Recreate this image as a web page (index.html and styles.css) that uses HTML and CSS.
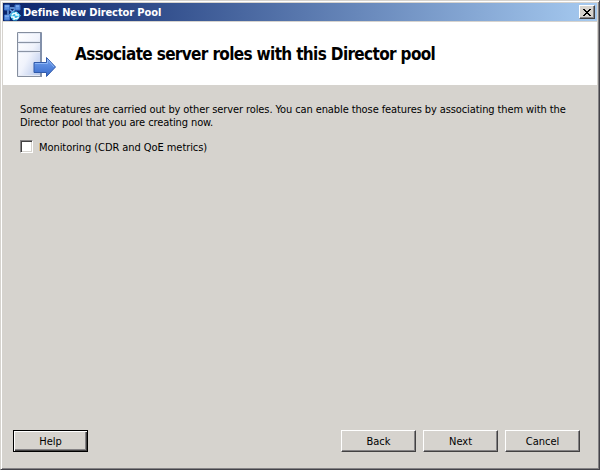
FILE: index.html
```html
<!DOCTYPE html>
<html lang="en">
<head>
<meta charset="utf-8">
<title>Define New Director Pool</title>
<link rel="stylesheet" href="styles.css">
</head>
<body>
<main class="window">
  <div class="titlebar">
    <svg class="app-icon" width="17" height="17" viewBox="0 0 17 17">
      <path d="M4 4 12 4M4 4V13M4 4 13 12M12 4 4 13" stroke="#78a9e8" stroke-width="1.4" fill="none"/>
      <path d="M.5 1h5v5h-5zM11 1h5v5h-5zM.5 11h5v5h-5z" fill="#5a8fe0" stroke="#3a70c8"/>
      <path d="M1 2h4M12 2h3M1 12h4" stroke="#93c0fa"/>
      <path d="M6 11.500 9 8h4l3.500 3.500L13 16H9z" fill="#35b5e2" stroke="#35b5e2"/>
      <path d="M8 11.500c0-2 3-3 5-1M14.500 12.500c0 2-3 3-5 1M12 8v3h3M10 16v-3H7" stroke="#f5feff" stroke-width="1.400" fill="none"/>
    </svg>
    <span class="title">Define New Director Pool</span>
    <button class="close" aria-label="Close">
      <svg width="8" height="7" viewBox="0 0 8 7" shape-rendering="crispEdges"><path d="M0 0h2v1h1v1h2V1h1V0h2v1H7v1H6v1H5v1h1v1h1v1h1v1H6V6H5V5H3v1H2v1H0V6h1V5h1V4h1V3H2V2H1V1H0z"/></svg>
    </button>
  </div>
  <header class="header">
    <svg class="server" width="40" height="46" viewBox="0 0 40 46">
      <defs>
        <linearGradient id="face" x2="1" y2="1"><stop stop-color="#fff"/><stop offset=".5" stop-color="#f0f3fc"/><stop offset="1" stop-color="#b3c5ea"/></linearGradient>
        <linearGradient id="arrow" x2="0" y2="1"><stop stop-color="#75a4f0"/><stop offset="1" stop-color="#3568cb"/></linearGradient>
      </defs>
      <path d="M.5.5h24v44H.5z" fill="url(#face)" stroke="#858e9e"/>
      <path d="M1.500 1.500h22v8h-22zM1.500 11.500h22v7h-22zM1.500 20.500h22v23h-22z" fill="url(#face)" stroke="#e5eaf5"/>
      <path d="M1 10.500h23M1 19.500h23" stroke="#8b94a5"/>
      <path d="M24 1v44" stroke="#8290aa" stroke-width="2"/>
      <path d="M17 30.500h12.500v-5L38.500 35 29.500 44.500V40.500H17z" fill="url(#arrow)" stroke="#315aa9"/>
      <path d="M18 31.500h12.500v-4l6.500 7.500" stroke="#8cb5f6" fill="none"/>
    </svg>
    <h1>Associate server roles with this Director pool</h1>
  </header>
  <section class="content">
    <p>Some features are carried out by other server roles. You can enable those features by associating them with the<br>Director pool that you are creating now.</p>
    <label class="option"><input type="checkbox"><span>Monitoring (CDR and QoE metrics)</span></label>
  </section>
  <footer class="footer">
    <button class="button default">Help</button>
    <div class="actions">
      <button class="button">Back</button>
      <button class="button">Next</button>
      <button class="button">Cancel</button>
    </div>
  </footer>
</main>
</body>
</html>
```
FILE: styles.css
```css
* { box-sizing: border-box; }
body { margin: 0; background: #d6d3ce; }
body, button { font: 11px/13px "DejaVu Sans Condensed", "DejaVu Sans", sans-serif; font-stretch: condensed; color: #000; }
button { padding: 0; margin: 0; }
.window {
  width: 600px; height: 470px; padding: 2px 1px 0 1px;
  display: flex; flex-direction: column;
  background: #d6d3ce;
  border: 1px solid; border-color: #d6d3ce #444349 #444349 #d6d3ce;
  box-shadow: inset 1px 1px #fff, inset -1px -1px #848284;
}
.titlebar {
  height: 18px; flex: none; margin: 0 1px; padding: 0 2px 0 1px;
  display: flex; align-items: center;
  background: linear-gradient(90deg, #0a246a, #a6caf0);
  color: #fff;
}
.app-icon { flex: none; margin-right: 2px; }
.title { font-weight: bold; flex: 1; white-space: nowrap; letter-spacing: -.1px; }
.close {
  width: 16px; height: 14px; display: flex; align-items: center; justify-content: center;
  background: #d6d3ce; border: 1px solid; border-color: #fff #424142 #424142 #fff;
  box-shadow: inset -1px -1px #848284;
}
.header {
  height: 63px; flex: none; margin: 1px 1px 0; padding-left: 14px;
  display: flex; align-items: center; background: #fff;
}
.server { flex: none; margin-top: 2px; }
h1 { margin: 0 0 0 18px; font-size: 17px; line-height: 22px; letter-spacing: -.65px; white-space: nowrap; }
.content { flex: 1; padding: 18px 18px 0; }
p { margin: 0; letter-spacing: -.1px; white-space: nowrap; }
.option { display: flex; align-items: center; margin-top: 11px; letter-spacing: -.07px; }
.option input {
  appearance: none; width: 13px; height: 13px; margin: 0 6px 0 0; background: #fff;
  border: 1px solid; border-color: #848284 #fff #fff #848284;
  box-shadow: inset 1px 1px #424142, inset -1px -1px #d6d3ce;
}
.option span { position: relative; top: 1px; }
.footer { display: flex; justify-content: space-between; padding: 0 18px 17px 11px; }
.actions { display: flex; gap: 7px; }
.button {
  width: 75px; height: 22px; background: #d6d3ce;
  border: 1px solid; border-color: #fff #424142 #424142 #fff;
  box-shadow: inset -1px -1px #848284;
}
.default {
  border-color: #000;
  box-shadow: inset 1px 1px #fff, inset -1px -1px #424142, inset -2px -2px #848284;
}
```
